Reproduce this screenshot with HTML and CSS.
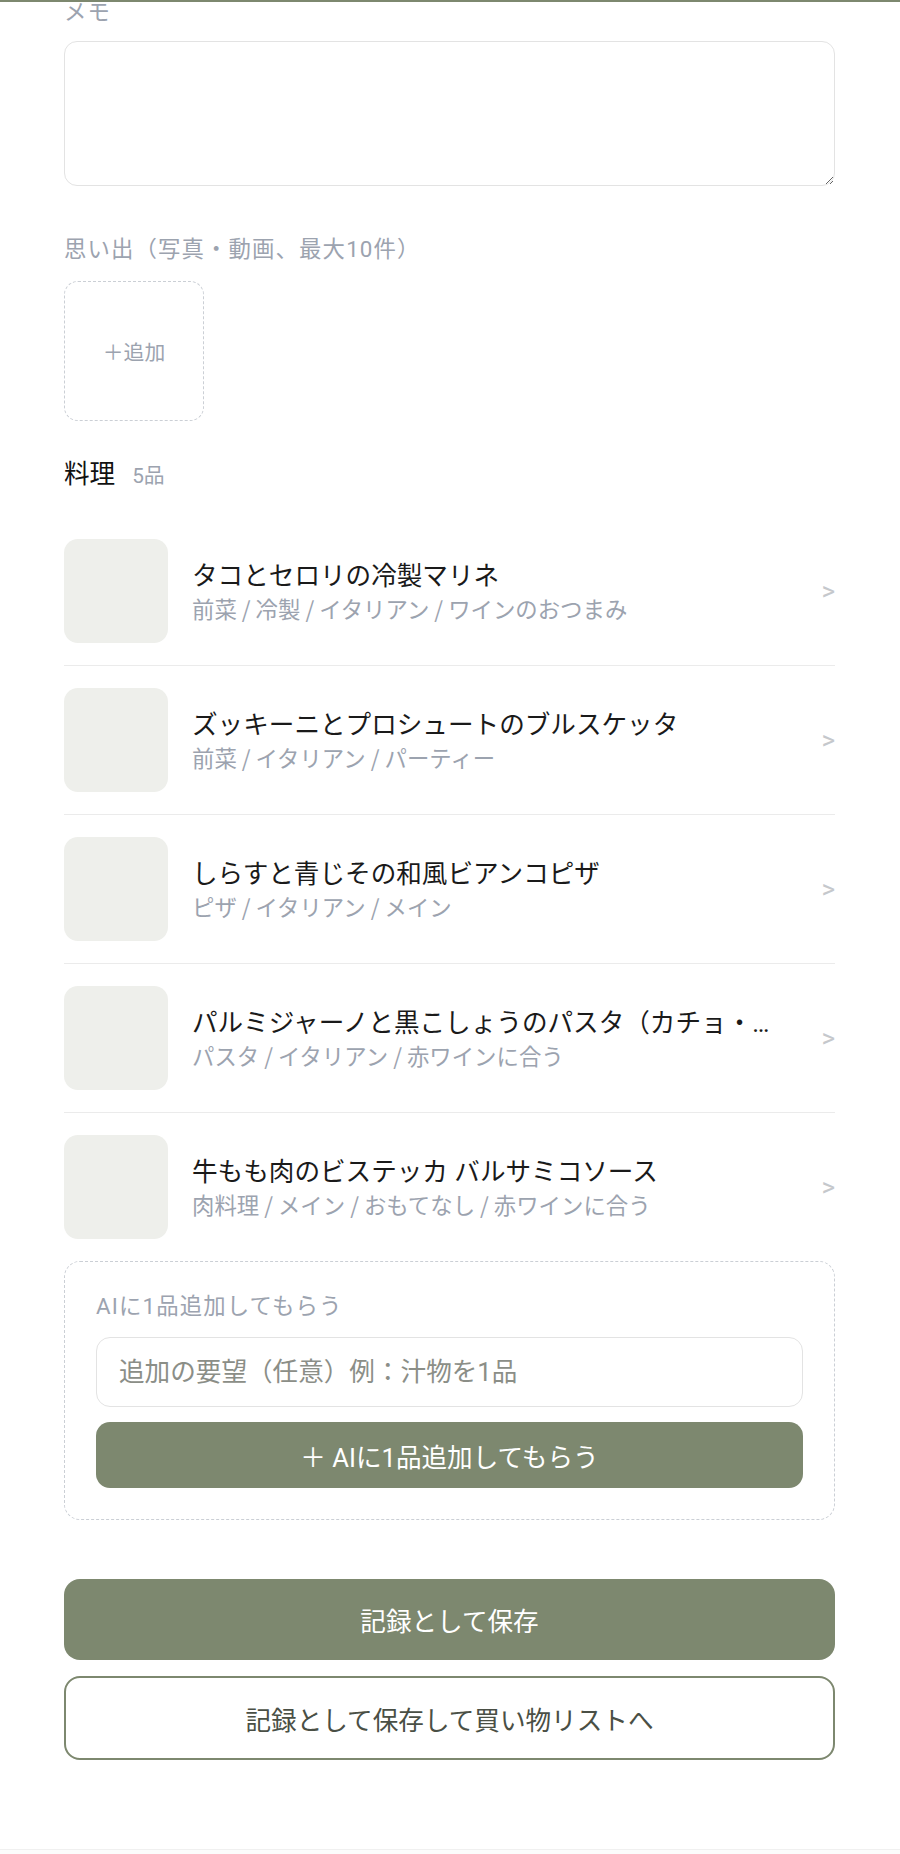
FILE: index.html
```html
<!DOCTYPE html>
<html lang="ja">
<head>
    <meta charset="UTF-8">
    <meta name="viewport" content="width=device-width, initial-scale=1.0">
    <title>記録を作成</title>
    <link rel="stylesheet" href="styles.css">
</head>
<body>
    <div class="header-line"></div>
    <main class="page">
        <div class="form-group memo-group">
            <label for="memo" class="field-label">メモ</label>
            <textarea id="memo"></textarea>
        </div>

        <div class="form-group media-group">
            <div class="field-label">思い出（写真・動画、最大10件）</div>
            <button class="media-add">＋追加</button>
        </div>

        <div class="dish-header">
            <span class="dish-header-title">料理</span>
            <span class="dish-count">5品</span>
        </div>

        <ul class="dish-list">
            <li class="dish">
                <div class="dish-thumb"></div>
                <div class="dish-text">
                    <div class="dish-name">タコとセロリの冷製マリネ</div>
                    <div class="dish-tags">前菜 / 冷製 / イタリアン / ワインのおつまみ</div>
                </div>
                <span class="dish-arrow">&gt;</span>
            </li>
            <li class="dish">
                <div class="dish-thumb"></div>
                <div class="dish-text">
                    <div class="dish-name">ズッキーニとプロシュートのブルスケッタ</div>
                    <div class="dish-tags">前菜 / イタリアン / パーティー</div>
                </div>
                <span class="dish-arrow">&gt;</span>
            </li>
            <li class="dish">
                <div class="dish-thumb"></div>
                <div class="dish-text">
                    <div class="dish-name">しらすと青じその和風ビアンコピザ</div>
                    <div class="dish-tags">ピザ / イタリアン / メイン</div>
                </div>
                <span class="dish-arrow">&gt;</span>
            </li>
            <li class="dish">
                <div class="dish-thumb"></div>
                <div class="dish-text">
                    <div class="dish-name">パルミジャーノと黒こしょうのパスタ（カチョ・エ・ペペ風）</div>
                    <div class="dish-tags">パスタ / イタリアン / 赤ワインに合う</div>
                </div>
                <span class="dish-arrow">&gt;</span>
            </li>
            <li class="dish">
                <div class="dish-thumb"></div>
                <div class="dish-text">
                    <div class="dish-name">牛もも肉のビステッカ バルサミコソース</div>
                    <div class="dish-tags">肉料理 / メイン / おもてなし / 赤ワインに合う</div>
                </div>
                <span class="dish-arrow">&gt;</span>
            </li>
        </ul>

        <div class="ai-box">
            <div class="ai-label">AIに1品追加してもらう</div>
            <input type="text" class="ai-input" placeholder="追加の要望（任意）例：汁物を1品">
            <button class="ai-button">＋ AIに1品追加してもらう</button>
        </div>

        <button class="btn-save">記録として保存</button>
        <button class="btn-save-list">記録として保存して買い物リストへ</button>
    </main>
    <div class="bottom-bar"></div>
</body>
</html>
```

FILE: styles.css
```css
body {
    margin: 0;
    font-family: Roboto, "Noto Sans CJK JP", sans-serif;
    color: #1a1a1a;
    background: #fff;
}
.header-line {
    height: 2px;
    background-color: #7d886f;
}
.page {
    padding: 0 65px 0 64px;
}
.form-group {
    margin-bottom: 47px;
}
.memo-group {
    margin-top: -6px;
}
.memo-group .field-label {
    margin-bottom: 13px;
}
.media-group {
    margin-bottom: 35px;
}
.field-label {
    display: block;
    font-size: 22.4px;
    line-height: 32px;
    letter-spacing: 0.05em;
    color: #9ca3af;
    margin-bottom: 16px;
}
textarea {
    display: block;
    width: 100%;
    height: 145px;
    box-sizing: border-box;
    border: 1px solid #e3e3e3;
    border-radius: 13px;
    padding: 16px 20px;
    font: inherit;
    font-size: 25.6px;
    resize: vertical;
}
.media-add {
    display: flex;
    align-items: center;
    justify-content: center;
    width: 140px;
    height: 140px;
    box-sizing: border-box;
    border: 1px dashed #cbcfd5;
    border-radius: 14px;
    background: #fff;
    font-family: inherit;
    font-size: 20.8px;
    color: #9ca3af;
    padding: 0;
}
.dish-header {
    height: 36px;
    line-height: 36px;
    margin-bottom: 25px;
}
.dish-header-title {
    font-size: 25.6px;
    color: #111;
}
.dish-count {
    font-size: 20.8px;
    color: #9ca3af;
    margin-left: 13px;
}
.dish-list {
    list-style: none;
    margin: 0;
    padding: 0;
}
.dish {
    display: flex;
    align-items: center;
    padding: 22px 0;
    border-bottom: 1px solid #ebebeb;
}
.dish:last-child {
    border-bottom: none;
}
.dish-thumb {
    flex: none;
    width: 104px;
    height: 104px;
    border-radius: 14px;
    background-color: #eeefeb;
}
.dish-text {
    flex: 1;
    min-width: 0;
    margin-left: 24px;
}
.dish-name {
    font-size: 25.6px;
    line-height: 34px;
    color: #1a1a1a;
    white-space: nowrap;
    overflow: hidden;
    text-overflow: ellipsis;
}
.dish-tags {
    font-family: "Noto Sans CJK JP", sans-serif;
    font-size: 22.4px;
    line-height: 30px;
    color: #9ca3af;
    white-space: nowrap;
    overflow: hidden;
    text-overflow: ellipsis;
}
.dish-arrow {
    flex: none;
    margin-left: 40px;
    font-size: 26px;
    color: #c5c8cc;
}
.ai-box {
    border: 1px dashed #cbcfd5;
    border-radius: 16px;
    padding: 32px 31px 31px;
}
.ai-label {
    font-size: 22.4px;
    line-height: 24px;
    letter-spacing: 0.05em;
    color: #9ca3af;
    margin-bottom: 19px;
}
.ai-input {
    display: block;
    width: 100%;
    height: 70px;
    box-sizing: border-box;
    border: 1px solid #e3e3e3;
    border-radius: 14px;
    padding: 0 22px;
    font-family: inherit;
    font-size: 25.6px;
    color: #1a1a1a;
}
.ai-input::placeholder {
    color: #8b8e87;
}
.ai-button {
    display: block;
    width: 100%;
    height: 66px;
    margin-top: 15px;
    border: none;
    border-radius: 14px;
    background-color: #7d886f;
    color: #fff;
    font-family: inherit;
    font-size: 25.6px;
    cursor: pointer;
}
.btn-save {
    display: block;
    width: 100%;
    height: 81px;
    margin-top: 59px;
    border: none;
    border-radius: 16px;
    background-color: #7d886f;
    color: #fff;
    font-family: inherit;
    font-size: 25.6px;
    cursor: pointer;
}
.btn-save-list {
    display: block;
    width: 100%;
    height: 84px;
    margin-top: 16px;
    border: 2px solid #7d886f;
    border-radius: 16px;
    background-color: #fff;
    color: #4a4f45;
    font-family: inherit;
    font-size: 25.6px;
    cursor: pointer;
}
.bottom-bar {
    height: 40px;
    margin-top: 89px;
    border-top: 1px solid #f0f0f0;
    background-color: #fcfcfc;
}
```
